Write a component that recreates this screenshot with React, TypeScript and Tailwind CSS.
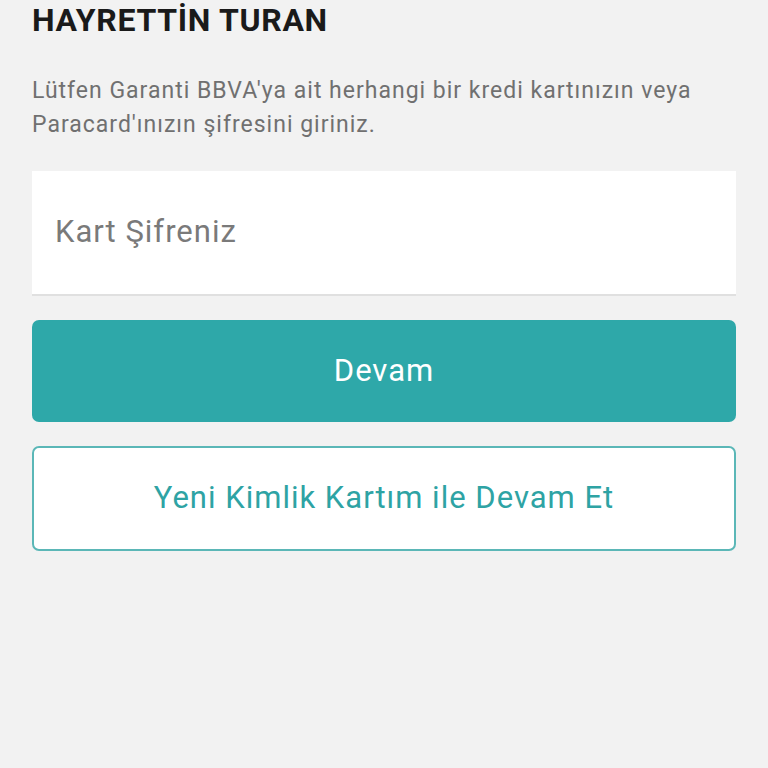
export default function App() {
  return (
    <div className="min-h-[768px] w-full bg-[#f2f2f2] px-8 font-['Roboto','Liberation_Sans',sans-serif]">
      <h1 className="pt-[1px] text-[32px] font-bold leading-[38px] tracking-[0.7px] text-[#1a1a1a]">HAYRETTİN TURAN</h1>

      <p className="mt-[35px] text-[23px] leading-[34px] tracking-[1px] text-[#707070]">
        Lütfen Garanti BBVA'ya ait herhangi bir kredi kartınızın veya Paracard'ınızın şifresini giriniz.
      </p>

      <div className="mt-[29px] flex h-[125px] items-center border-b-2 border-[#e0e0e0] bg-white px-[23px]">
        <input
          type="password"
          placeholder="Kart Şifreniz"
          className="w-full bg-transparent text-[31px] tracking-[1px] text-[#333] outline-none placeholder:text-[#7a7a7a]"
        />
      </div>

      <button className="mt-[24px] flex h-[102px] w-full items-center justify-center rounded-[7px] bg-[#2ea8a9] text-[31px] tracking-[1px] text-white">
        Devam
      </button>

      <button className="mt-[24px] flex h-[105px] w-full items-center justify-center rounded-[7px] border-2 border-[#5bb7b7] bg-white text-[31px] tracking-[1px] text-[#2ea3a4]">
        Yeni Kimlik Kartım ile Devam Et
      </button>
    </div>
  );
}
